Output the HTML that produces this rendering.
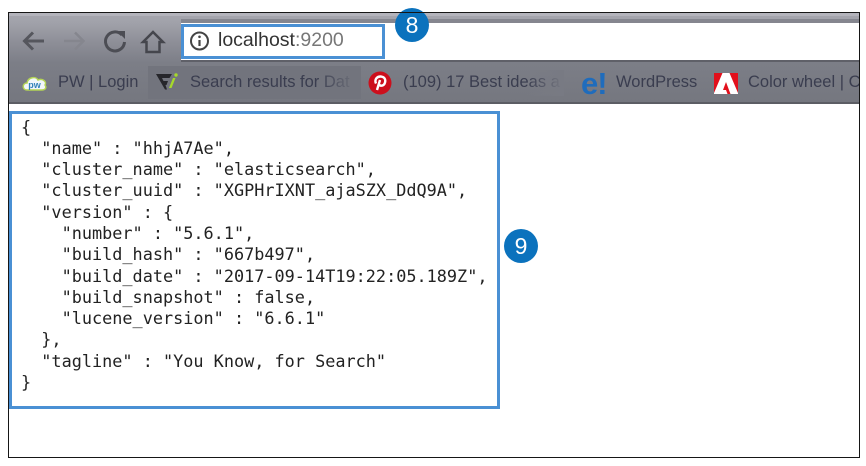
<!DOCTYPE html>
<html><head><meta charset="utf-8">
<style>
html,body{margin:0;padding:0;background:#fff;width:866px;height:466px;overflow:hidden}
.a{position:absolute}
body{font-family:"Liberation Sans",sans-serif}
#frame{left:8px;top:12px;width:850px;height:444px;border:1px solid #161616;box-sizing:content-box}
#bar{left:9px;top:13px;width:850px;height:89px;background:linear-gradient(#a6a6af 0,#a2a3ab 8px,#8d8e97 30px,#7c7e87 50px,#75777f 100%)}
#white{left:181px;top:23px;width:678px;height:37px;background:#fff}
#url{left:181px;top:24px;width:204px;height:35px;border:3px solid #4a90d4;box-sizing:border-box;background:#fff}
.u{font-size:19.5px;top:29px;color:#333;white-space:nowrap}
.b{font-size:16.5px;top:73px;color:#3a3d4f;white-space:nowrap;filter:blur(.35px)}
#act{left:148px;top:66px;width:213px;height:33px;background:#72747d}
#code{left:21px;top:116.500px;margin:0;font-family:"DejaVu Sans Mono","Liberation Mono",monospace;font-size:16.85px;line-height:21.3px;color:#222;white-space:pre}
#box{left:9px;top:111px;width:491px;height:298px;border:3px solid #4a90d4;box-sizing:border-box}
.c{width:34px;height:34px;border-radius:50%;background:#0b72bd;color:#fff;font-size:23px;line-height:34px;text-align:center}
#fade{left:316px;top:70px;width:42px;height:26px;background:linear-gradient(90deg,rgba(114,116,125,0),#72747d)}
#fade2{left:526px;top:70px;width:38px;height:26px;background:linear-gradient(90deg,rgba(120,122,131,0),#787a83)}
</style></head><body>
<div class="a" id="bar"></div>
<div class="a" style="left:9px;top:13px;width:850px;height:3px;background:#b4b4bc"></div>
<div class="a" style="left:181px;top:19px;width:678px;height:4px;background:#85868f"></div>
<div class="a" id="white"></div>
<div class="a" style="left:181px;top:60px;width:678px;height:2px;background:#5f6068"></div>
<div class="a" style="left:9px;top:102px;width:850px;height:2px;background:#5c5d64"></div>
<div class="a" id="act"></div>
<div class="a" id="url"></div>
<svg class="a" style="left:20px;top:26px;filter:blur(.3px)" width="150" height="32" viewBox="0 0 150 32" fill="none">
<path d="M5 15H24M13 6.500L4.500 15L13 23.500" stroke="#55565d" stroke-width="3"/>
<path d="M44 15H63M55 6.500L63.500 15L55 23.500" stroke="#85868e" stroke-width="2.500"/>
<path d="M102 9A9.500 9.500 0 1 0 104.500 16" stroke="#4c4d54" stroke-width="3"/>
<path d="M97 5H105V13Z" fill="#4c4d54"/>
<path d="M123 16L133 6L143 16H139.500V26H126.500V16Z" stroke="#45464d" stroke-width="2.500"/>
</svg>
<svg class="a" style="left:189px;top:30px" width="22" height="22" viewBox="0 0 22 22" fill="none">
<circle cx="10.500" cy="11" r="8.500" stroke="#444" stroke-width="2"/>
<path d="M10.500 10V16" stroke="#444" stroke-width="2.200"/><circle cx="10.500" cy="6.800" r="1.300" fill="#444"/>
</svg>
<div class="a u" style="left:218px"><span>localhost</span><span style="color:#777">:9200</span></div>
<div class="a c" style="left:395px;top:8px">8</div>
<svg class="a" style="left:22px;top:72px" width="26" height="22" viewBox="0 0 26 22">
<path d="M5 18C0 18 0 11 5 11C6 5 14 4 16 8C21 6 25 10 23 13C25 16 23 18 20 18Z" fill="#f2f6fa" stroke="#b4d455" stroke-width="1.500"/>
<text x="12.500" y="16" font-size="9" font-weight="bold" fill="#2f7fb8" text-anchor="middle" font-family="Liberation Sans">pw</text>
</svg>
<div class="a b" style="left:58px">PW | Login</div>
<svg class="a" style="left:154px;top:71px" width="26" height="22" viewBox="0 0 26 22">
<path d="M2 3H18L15.500 7H8L9.500 10H14L12.500 14H11.500L13 18.500H11Z" fill="#26262b"/>
<path d="M15 17L19 7H21.500L17.500 17Z" fill="#a6d92a"/><circle cx="22" cy="4" r="1.700" fill="#a6d92a"/>
</svg>
<div class="a b" style="left:190px;width:166px;overflow:hidden">Search results for Dat</div>
<div class="a" id="fade"></div>
<svg class="a" style="left:368px;top:71px" width="24" height="24" viewBox="0 0 24 24">
<circle cx="12" cy="12" r="11.500" fill="#cc0f1c"/>
<path d="M9 19L12 9M8 12.500C6 8 9.500 5.500 12.500 5.500C16 5.500 18 8 17 11.500C16 15 12.500 15.500 11 13.500" fill="none" stroke="#fff" stroke-width="2.400"/>
</svg>
<div class="a b" style="left:403px;width:158px;overflow:hidden">(109) 17 Best ideas ab</div>
<div class="a" id="fade2"></div>
<div class="a" style="left:581px;top:63.500px;font:bold 31px/40px 'Liberation Sans',sans-serif;color:#1f6cbc;letter-spacing:-1px">e!</div>
<div class="a b" style="left:616px">WordPress</div>
<svg class="a" style="left:714px;top:73px" width="24" height="22" viewBox="0 0 24 22">
<rect width="24" height="21" fill="#fff"/>
<path d="M0 0H8.500L0 20Z M15.500 0H24V20Z M12 9L16.500 21H13.500L12 17H9Z" fill="#e2101c"/>
</svg>
<div class="a b" style="left:748px;width:111px;overflow:hidden">Color wheel | C</div>
<pre class="a" id="code">{
  "name" : "hhjA7Ae",
  "cluster_name" : "elasticsearch",
  "cluster_uuid" : "XGPHrIXNT_ajaSZX_DdQ9A",
  "version" : {
    "number" : "5.6.1",
    "build_hash" : "667b497",
    "build_date" : "2017-09-14T19:22:05.189Z",
    "build_snapshot" : false,
    "lucene_version" : "6.6.1"
  },
  "tagline" : "You Know, for Search"
}</pre>
<div class="a" id="box"></div>
<div class="a c" style="left:504px;top:229px">9</div>
<div class="a" id="frame"></div>
</body></html>
